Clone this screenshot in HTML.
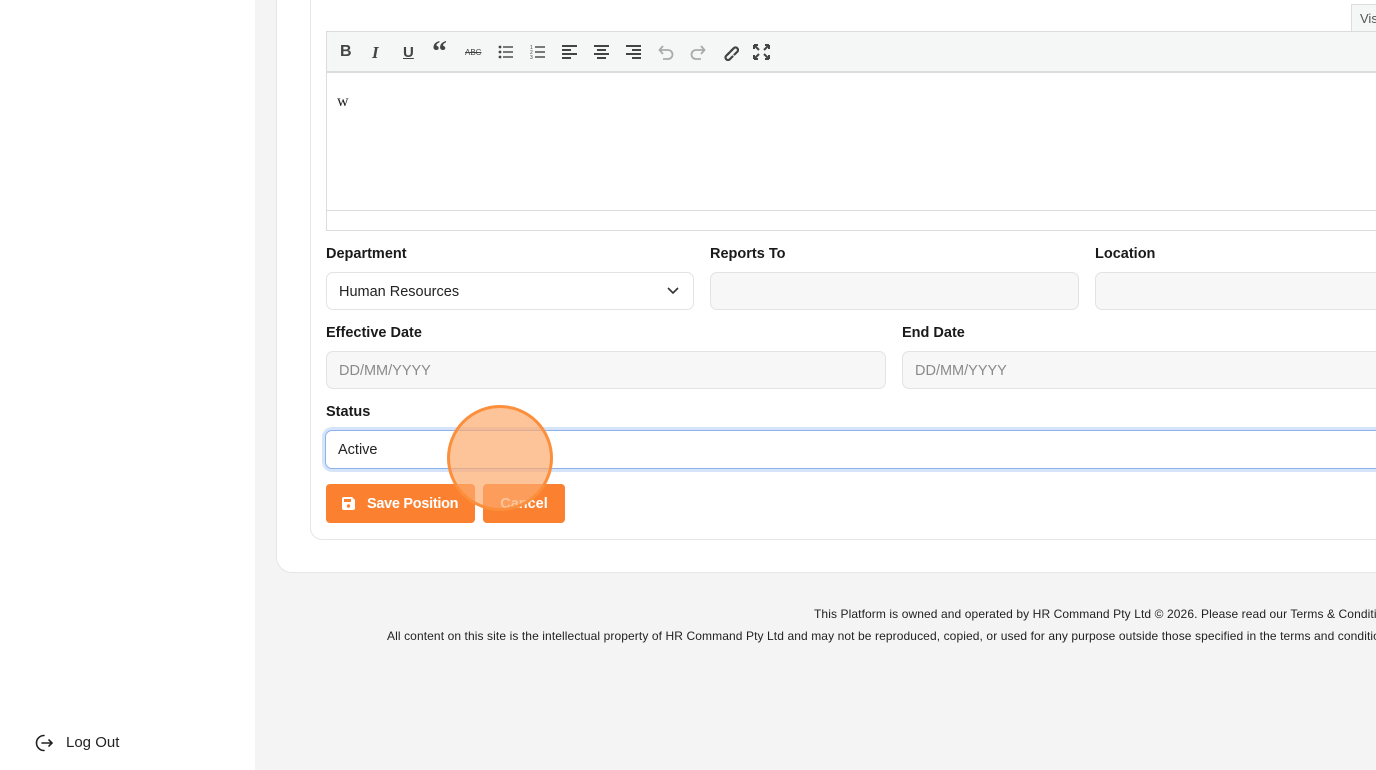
<!DOCTYPE html>
<html><head><style>
*{box-sizing:border-box;margin:0;padding:0}
body{width:1376px;height:770px;overflow:hidden;background:#f4f4f4;font-family:"Liberation Sans",sans-serif;position:relative;color:#1f2328}
.side{position:absolute;left:0;top:0;width:255px;height:770px;background:#fff}
.abs{position:absolute}
.outer{position:absolute;left:276px;top:-20px;width:1200px;height:593px;background:#fff;border:1px solid #e6e6e6;border-radius:16px}
.inner{position:absolute;left:310px;top:-20px;width:1200px;height:560px;background:#fff;border:1px solid #e6e6e6;border-radius:12px}
.lbl{position:absolute;font-size:14.5px;font-weight:bold;color:#1a1a1a}
.inp{position:absolute;height:38px;border:1px solid #e3e3e3;border-radius:7px;background:#f7f7f7;font-size:14.5px;color:#222;padding:0 12px;line-height:38px}
.ph{color:#8a8a8a}
.tb{position:absolute;top:43px;font-size:16px;color:#444;font-weight:bold}
.btn{position:absolute;top:484px;height:39px;background:#fb8130;border-radius:4px;color:#fff;font-weight:bold;font-size:14.5px;line-height:40px}
</style></head><body>
<div class="side"></div>
<div class="abs" style="left:34px;top:732px;width:22px;height:22px">
<svg width="22" height="22" viewBox="0 0 22 22" fill="none" stroke="#222" stroke-width="1.6" stroke-linecap="round"><path d="M10 3.5A7.5 7.5 0 1 0 10 18.5"/><path d="M8 11H18M15 8l3 3-3 3"/></svg></div>
<div class="abs" style="left:66px;top:734px;font-size:15px;color:#222">Log Out</div>
<div class="outer"></div>
<div class="inner"></div>
<div class="abs" style="left:1351px;top:4px;width:40px;height:28px;border:1px solid #ddd;border-bottom:none;background:#f5f6f6;font-size:13px;color:#555;padding:6px 0 0 8px">Vis</div>
<div class="abs" style="left:326px;top:31px;width:1100px;height:200px;border:1px solid #dcdcdc;background:#fff"></div>
<div class="abs" style="left:327px;top:32px;width:1100px;height:41px;background:#f5f6f6;border-bottom:2px solid #dcdcdc"></div>
<div class="abs" style="left:327px;top:210px;width:1100px;height:1px;background:#dcdcdc"></div>
<div class="tb" style="left:340px">B</div>
<div class="tb" style="left:372px;font-style:italic;font-family:'Liberation Serif',serif;font-size:17px">I</div>
<div class="tb" style="left:403px;text-decoration:underline;font-weight:bold;font-size:15px;top:44px">U</div>
<div class="tb" style="left:432px;font-size:30px;top:37px;font-family:'Liberation Serif',serif;line-height:30px">“</div>
<div class="tb" style="left:465px;font-size:8px;top:48px;font-weight:normal;text-decoration:line-through">ABC</div>
<svg class="abs" style="left:498px;top:44px" width="16" height="16" viewBox="0 0 16 16" fill="#444"><circle cx="2" cy="3" r="1.4"/><circle cx="2" cy="8" r="1.4"/><circle cx="2" cy="13" r="1.4"/><rect x="5" y="2.3" width="10" height="1.4"/><rect x="5" y="7.3" width="10" height="1.4"/><rect x="5" y="12.3" width="10" height="1.4"/></svg>
<svg class="abs" style="left:530px;top:44px" width="16" height="16" viewBox="0 0 16 16" fill="#444"><text x="0" y="5" font-size="5">1</text><text x="0" y="10" font-size="5">2</text><text x="0" y="15" font-size="5">3</text><rect x="5" y="2.3" width="10" height="1.4"/><rect x="5" y="7.3" width="10" height="1.4"/><rect x="5" y="12.3" width="10" height="1.4"/></svg>
<svg class="abs" style="left:562px;top:45px" width="16" height="15" fill="#444"><rect y="0" width="15" height="2"/><rect y="4" width="9" height="2"/><rect y="8" width="15" height="2"/><rect y="12" width="9" height="2"/></svg>
<svg class="abs" style="left:594px;top:45px" width="16" height="15" fill="#444"><rect y="0" width="15" height="2"/><rect x="3" y="4" width="9" height="2"/><rect y="8" width="15" height="2"/><rect x="3" y="12" width="9" height="2"/></svg>
<svg class="abs" style="left:626px;top:45px" width="16" height="15" fill="#444"><rect y="0" width="15" height="2"/><rect x="6" y="4" width="9" height="2"/><rect y="8" width="15" height="2"/><rect x="6" y="12" width="9" height="2"/></svg>
<svg class="abs" style="left:657px;top:44px" width="18" height="16" fill="none" stroke="#aaa" stroke-width="1.8"><path d="M3 6h8a4.5 4.5 0 0 1 0 9H6"/><path d="M6 2L2.5 6 6 10"/></svg>
<svg class="abs" style="left:689px;top:44px" width="18" height="16" fill="none" stroke="#aaa" stroke-width="1.8"><path d="M15 6H7a4.5 4.5 0 0 0 0 9h5"/><path d="M12 2l3.5 4L12 10"/></svg>
<svg class="abs" style="left:721px;top:43px" width="18" height="18" fill="none" stroke="#444" stroke-width="2.2" stroke-linecap="round"><path d="M8 10l-3 3a2.5 2.5 0 0 0 3.5 3.5l3-3"/><path d="M10 8l3-3a2.5 2.5 0 0 1 3.5 3.5l-3 3"/><path d="M7 11l4-4"/></svg>
<svg class="abs" style="left:753px;top:44px" width="17" height="16" fill="none" stroke="#444" stroke-width="2"><path d="M1 1l5 5M16 1l-5 5M1 15l5-5M16 15l-5-5"/><path d="M1 1h4M1 1v4M16 1h-4M16 1v4M1 15h4M1 15v-4M16 15h-4M16 15v-4"/></svg>
<div class="abs" style="left:337px;top:93px;font-family:'Liberation Serif',serif;font-size:16px;color:#222">w</div>
<div class="lbl" style="left:326px;top:246px">Department</div>
<div class="lbl" style="left:710px;top:246px">Reports To</div>
<div class="lbl" style="left:1095px;top:246px">Location</div>
<div class="inp" style="left:326px;top:272px;width:368px;background:#fff">Human Resources
<svg style="position:absolute;right:14px;top:14px" width="12" height="8" fill="none" stroke="#333" stroke-width="1.6"><path d="M1 1l5 5 5-5"/></svg></div>
<div class="inp" style="left:710px;top:272px;width:369px"></div>
<div class="inp" style="left:1095px;top:272px;width:400px"></div>
<div class="lbl" style="left:326px;top:325px">Effective Date</div>
<div class="lbl" style="left:902px;top:325px">End Date</div>
<div class="inp ph" style="left:326px;top:351px;width:560px">DD/MM/YYYY</div>
<div class="inp ph" style="left:902px;top:351px;width:600px">DD/MM/YYYY</div>
<div class="lbl" style="left:326px;top:404px">Status</div>
<div class="inp" style="left:325px;top:430px;width:1200px;background:#fff;border:1px solid #8db3ec;box-shadow:0 0 0 3px #d6e4fa;height:39px">Active</div>
<div class="btn" style="left:326px;width:149px;padding-left:41px;letter-spacing:-0.3px">Save Position</div>
<svg class="abs" style="left:342px;top:497px" width="13" height="13" viewBox="0 0 13 13"><path d="M0 2a2 2 0 0 1 2-2h8l3 3v8a2 2 0 0 1-2 2H2a2 2 0 0 1-2-2z" fill="#fff"/><rect x="2" y="2" width="7" height="3" fill="#fb8130"/><circle cx="6.5" cy="9" r="1.7" fill="#fb8130"/></svg>
<div class="btn" style="left:483px;width:82px;text-align:center">Cancel</div>
<div class="abs" style="left:447px;top:405px;width:106px;height:106px;border-radius:50%;background:rgba(252,170,110,0.7);border:3px solid #fb8f3c"></div>
<div class="abs" style="left:814px;top:607px;font-size:12px;color:#222;white-space:nowrap;letter-spacing:0.1px">This Platform is owned and operated by HR Command Pty Ltd © 2026. Please read our Terms &amp; Conditions</div>
<div class="abs" style="left:387px;top:629px;font-size:12px;color:#222;white-space:nowrap;letter-spacing:0.1px">All content on this site is the intellectual property of HR Command Pty Ltd and may not be reproduced, copied, or used for any purpose outside those specified in the terms and conditions.</div>
</body></html>
